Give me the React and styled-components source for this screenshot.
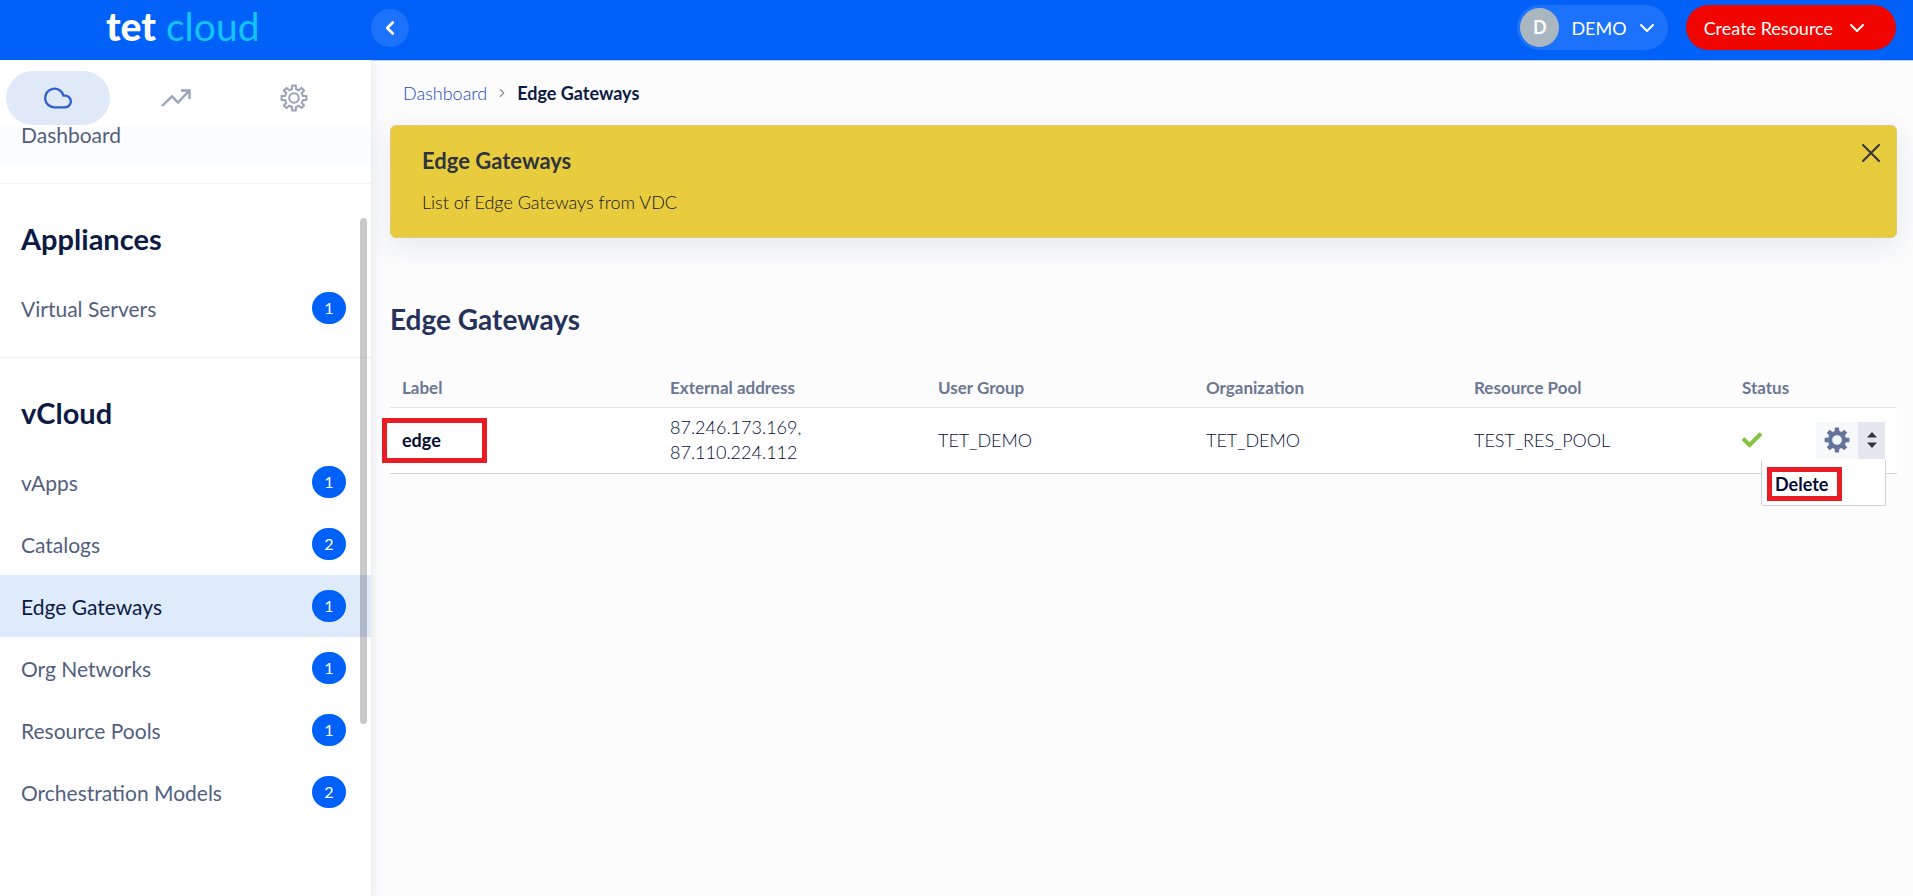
import React,{useState} from 'react'
import styled,{createGlobalStyle} from 'styled-components'
import {FiCloud,FiChevronLeft,FiChevronDown,FiChevronRight} from 'react-icons/fi'
import {FaCheck} from 'react-icons/fa'

const sections = [
  {title: 'Appliances', items: [{name: 'Virtual Servers', count: 1}]},
  {title: 'vCloud', items: [
    {name: 'vApps', count: 1},
    {name: 'Catalogs', count: 2},
    {name: 'Edge Gateways', count: 1},
    {name: 'Org Networks', count: 1},
    {name: 'Resource Pools', count: 1},
    {name: 'Orchestration Models', count: 2},
  ]},
]

const gateways = [
  {label: 'edge', address: ['87.246.173.169,', '87.110.224.112'], group: 'TET_DEMO', org: 'TET_DEMO', pool: 'TEST_RES_POOL'},
]

// eight square teeth around a ring, r = outer radius, b = body radius
function gearPath(r, b, top, base) {
  let d = ''
  for (let i = 0; i < 8; i++) {
    const a = i * Math.PI / 4
    const pts = [[b, -base], [r, -top], [r, top], [b, base]]
    pts.forEach(([rad, off]) => {
      const x = 14 + rad * Math.sin(a + off)
      const y = 14 - rad * Math.cos(a + off)
      d += (d ? 'L' : 'M') + x.toFixed(2) + ' ' + y.toFixed(2)
    })
  }
  return d + 'Z'
}

function GearOutline() {
  return (
    <svg width="28" height="28" viewBox="0 0 28 28" fill="none" stroke="currentColor" strokeWidth="2" strokeLinejoin="round" aria-hidden="true">
      <path d={gearPath(12.6, 9.2, 0.15, 0.21)}/>
      <circle cx="14" cy="14" r="4.800"/>
    </svg>
  )
}

function GearSolid() {
  return (
    <svg width="28" height="28" viewBox="0 0 28 28" fill="currentColor" fillRule="evenodd" aria-hidden="true">
      <path d={gearPath(12.6, 9.2, 0.17, 0.25) + 'M14 9.200a4.800 4.800 0 1 0 0 9.600a4.800 4.800 0 1 0 0-9.600Z'}/>
    </svg>
  )
}

function TrendIcon() {
  return (
    <svg width="30" height="20" viewBox="0 0 30 20" fill="none" stroke="currentColor" strokeWidth="2.400" aria-hidden="true">
      <path d="M1 18L11 8.500L17 14.500L28 3M20 2.500H28.500V11"/>
    </svg>
  )
}

function Header() {
  return (
    <TopBar>
      <Brand href="#"><Tet>tet</Tet> cloud</Brand>
      <Collapse aria-label="Collapse menu"><FiChevronLeft size={22} strokeWidth={3}/></Collapse>
      <TopRight>
        <UserButton><Avatar>D</Avatar>DEMO<FiChevronDown size={24}/></UserButton>
        <CreateButton>Create Resource<FiChevronDown size={24}/></CreateButton>
      </TopRight>
    </TopBar>
  )
}

function Sidebar() {
  return (
    <Side>
      <Tabs>
        <Tab $active aria-label="Cloud"><FiCloud size={28}/></Tab>
        <Tab aria-label="Statistics"><TrendIcon/></Tab>
        <Tab aria-label="Settings"><GearOutline/></Tab>
      </Tabs>
      <nav>
        <HomeLink href="#">Dashboard</HomeLink>
        {sections.map(section => (
          <Section key={section.title}>
            <SectionTitle>{section.title}</SectionTitle>
            {section.items.map(item => (
              <NavLink key={item.name} href="#" $active={item.name === 'Edge Gateways'}>
                {item.name}
                <Badge>{item.count}</Badge>
              </NavLink>
            ))}
          </Section>
        ))}
      </nav>
      <ScrollThumb/>
    </Side>
  )
}

function RowActions() {
  const [open,setOpen] = useState(true)
  return (
    <Actions>
      <GearButton aria-label="Edit gateway"><GearSolid/></GearButton>
      <ArrowButton aria-label="More actions" onClick={()=>setOpen(!open)}>
        <svg width="10" height="16" viewBox="0 0 10 16" fill="currentColor" aria-hidden="true">
          <path d="M0 5.500L5 0L10 5.500ZM0 10.500L5 16L10 10.500Z"/>
        </svg>
      </ArrowButton>
      {open && <DropMenu><Marked $menu><MenuButton>Delete</MenuButton></Marked></DropMenu>}
    </Actions>
  )
}

function App() {
  const [notice,setNotice] = useState(true)
  return (
    <Page>
      <GlobalStyle/>
      <Header/>
      <Body>
        <Sidebar/>
        <Main>
          <Crumbs aria-label="Breadcrumb">
            <a href="#">Dashboard</a>
            <FiChevronRight size={14}/>
            <b>Edge Gateways</b>
          </Crumbs>
          <Content>
            {notice && (
              <Notice>
                <div>
                  <h2>Edge Gateways</h2>
                  <p>List of Edge Gateways from VDC</p>
                </div>
                <CloseButton aria-label="Close" onClick={()=>setNotice(false)}>
                  <svg width="18" height="18" viewBox="0 0 18 18" stroke="currentColor" strokeWidth="2" strokeLinecap="round" aria-hidden="true">
                    <path d="M1 1L17 17M17 1L1 17"/>
                  </svg>
                </CloseButton>
              </Notice>
            )}
            <PageTitle>Edge Gateways</PageTitle>
            <Table>
              <thead>
                <tr>
                  <th>Label</th>
                  <th>External address</th>
                  <th>User Group</th>
                  <th>Organization</th>
                  <th>Resource Pool</th>
                  <StatusHead>Status</StatusHead>
                </tr>
              </thead>
              <tbody>
                {gateways.map(g => (
                  <tr key={g.label}>
                    <td><Marked><a href="#">{g.label}</a></Marked></td>
                    <td>{g.address[0]}<br/>{g.address[1]}</td>
                    <td>{g.group}</td>
                    <td>{g.org}</td>
                    <td>{g.pool}</td>
                    <td>
                      <StatusCell>
                        <FaCheck size={20} color="#86c440" title="Active"/>
                        <RowActions/>
                      </StatusCell>
                    </td>
                  </tr>
                ))}
              </tbody>
            </Table>
          </Content>
        </Main>
      </Body>
    </Page>
  )
}

export default App


const GlobalStyle = createGlobalStyle`
  *{
    box-sizing: border-box;
  }
  body{
    margin: 0;
    font-family: Lato, "Liberation Sans", sans-serif;
    font-size: 18px;
    color: #0c1b45;
    background: #fcfcfd;
  }
  button{
    font: inherit;
    border: 0;
    padding: 0;
    cursor: pointer;
  }
  a{
    color: inherit;
    text-decoration: none;
  }
`
const Page = styled.div`
  min-height: 100vh;
  display: flex;
  flex-direction: column;
`
const TopBar = styled.header`
  height: 60px;
  flex: none;
  display: flex;
  align-items: flex-start;
  padding: 5px 17px 0 0;
  background: #0061f9;
  color: white;
`
const Brand = styled.a`
  width: 371px;
  padding-left: 106px;
  font-size: 39px;
  line-height: 42px;
  color: #12c3f4;
`
const Tet = styled.span`
  font-weight: 900;
  color: white;
`
const Collapse = styled.button`
  display: flex;
  align-items: center;
  justify-content: center;
  width: 38px;
  height: 38px;
  margin-top: 4px;
  border-radius: 50%;
  color: white;
  background: #1c72fa;
`
const TopRight = styled.div`
  display: flex;
  gap: 18px;
  margin-left: auto;
`
const UserButton = styled.button`
  display: flex;
  align-items: center;
  gap: 8px;
  height: 45px;
  padding: 0 9px 0 3px;
  border-radius: 23px;
  color: white;
  background: #1c72fa;
`
const Avatar = styled.span`
  width: 39px;
  height: 39px;
  margin-right: 4px;
  border-radius: 50%;
  line-height: 38px;
  font-weight: 700;
  background: #aab7c1;
`
const CreateButton = styled.button`
  display: flex;
  align-items: center;
  gap: 12px;
  height: 45px;
  padding: 0 27px 0 18px;
  border-radius: 23px;
  color: white;
  background: #f00500;
`
const Body = styled.div`
  flex: 1;
  display: flex;
`
const Side = styled.aside`
  position: relative;
  z-index: 1;
  width: 371px;
  flex: none;
  background: white;
  box-shadow: 0 4px 12px rgba(30,50,90,.12);
`
const Tabs = styled.div`
  display: flex;
  gap: 14px;
  padding: 11px 6px 1px;
`
const Tab = styled.button`
  display: flex;
  align-items: center;
  justify-content: center;
  width: 104px;
  height: 54px;
  border-radius: 27px;
  color: ${props => props.$active ? '#2f5fd0' : '#98a2b8'};
  background: ${props => props.$active ? '#dfe9f8' : 'none'};
`
const NavLink = styled.a`
  display: flex;
  align-items: center;
  justify-content: space-between;
  height: 62px;
  padding: 0 25px 0 21px;
  font-size: 21px;
  color: ${props => props.$active ? '#0c1b45' : '#525f7f'};
  background: ${props => props.$active ? '#dfeafb' : 'none'};
`
const HomeLink = styled(NavLink)`
  align-items: flex-start;
  height: 40px;
  margin-bottom: 17px;
  line-height: 18px;
  background: #fbfcfe;
`
const Badge = styled.span`
  width: 34px;
  height: 32px;
  border-radius: 17px;
  line-height: 32px;
  font-size: 16px;
  text-align: center;
  color: white;
  background: #0061f9;
`
const Section = styled.div`
  padding: 37px 0 18px;
  border-top: 1px solid #f0f2f5;
`
const SectionTitle = styled.h3`
  margin: 0 0 20px;
  padding-left: 21px;
  font-size: 29px;
  line-height: 36px;
`
const ScrollThumb = styled.div`
  position: absolute;
  top: 158px;
  right: 4px;
  width: 7px;
  height: 506px;
  border-radius: 4px;
  background: rgba(0,0,0,.21);
`
const Main = styled.main`
  flex: 1;
  min-width: 0;
`
const Crumbs = styled.nav`
  display: flex;
  align-items: center;
  gap: 8px;
  height: 65px;
  padding-left: 32px;
  border-top: 1px solid #b5d3fb;
  a{
    font-weight: 300;
    color: #1748bd;
  }
  svg{
    color: #8a8f98;
  }
`
const Content = styled.div`
  padding: 0 16px 0 19px;
`
const Notice = styled.section`
  display: flex;
  justify-content: space-between;
  align-items: flex-start;
  min-height: 113px;
  padding: 18px 16px 18px 31px;
  border: 1px solid #dccb7c;
  border-radius: 6px;
  background: #e9cc3e;
  box-shadow: 0 8px 28px rgba(30,50,90,.1);
  color: #30343f;
  h2{
    margin: 0 0 12px;
    font-size: 22px;
    line-height: 34px;
  }
  p{
    margin: 0;
    line-height: 24px;
    font-weight: 300;
    color: #101420;
  }
`
const CloseButton = styled.button`
  line-height: 0;
  color: inherit;
  background: none;
`
const PageTitle = styled.h1`
  margin: 61px 0 32px;
  font-size: 28px;
  line-height: 40px;
  color: #25325c;
`
const Table = styled.table`
  width: 100%;
  table-layout: fixed;
  border-collapse: collapse;
  th,td{
    width: 268px;
    padding: 0 12px;
    text-align: left;
    line-height: 25px;
  }
  th{
    height: 36px;
    padding-bottom: 2px;
    font-size: 17px;
    color: #6b7793;
    border-bottom: 1px solid #e4e5e8;
  }
  td{
    height: 66px;
    font-weight: 300;
    color: #030d33;
    background: white;
    border-bottom: 1px solid #d2d4d8;
  }
`
const StatusHead = styled.th`
  && {
    width: auto;
  }
`
const StatusCell = styled.div`
  display: flex;
  align-items: center;
  justify-content: space-between;
`
const Marked = styled.div`
  width: ${props => props.$menu ? '75px' : '105px'};
  padding: ${props => props.$menu ? '0 3px' : '5px 15px'};
  margin-left: ${props => props.$menu ? '0' : '-20px'};
  border: 5px solid #e81c24;
  font-weight: 700;
`
const Actions = styled.div`
  position: relative;
  display: flex;
`
const GearButton = styled.button`
  display: flex;
  align-items: center;
  justify-content: center;
  width: 42px;
  height: 37px;
  color: #66749c;
  background: #f7f8fa;
`
const ArrowButton = styled(GearButton)`
  width: 27px;
  color: #30343f;
  background: #e4e7ee;
`
const DropMenu = styled.div`
  position: absolute;
  top: 37px;
  right: -1px;
  width: 125px;
  padding: 8px 5px 4px;
  border: 1px solid #cfd1d6;
  border-top: 0;
  border-radius: 2px;
  background: white;
`
const MenuButton = styled.button`
  display: block;
  line-height: 24px;
  color: inherit;
  background: none;
`
